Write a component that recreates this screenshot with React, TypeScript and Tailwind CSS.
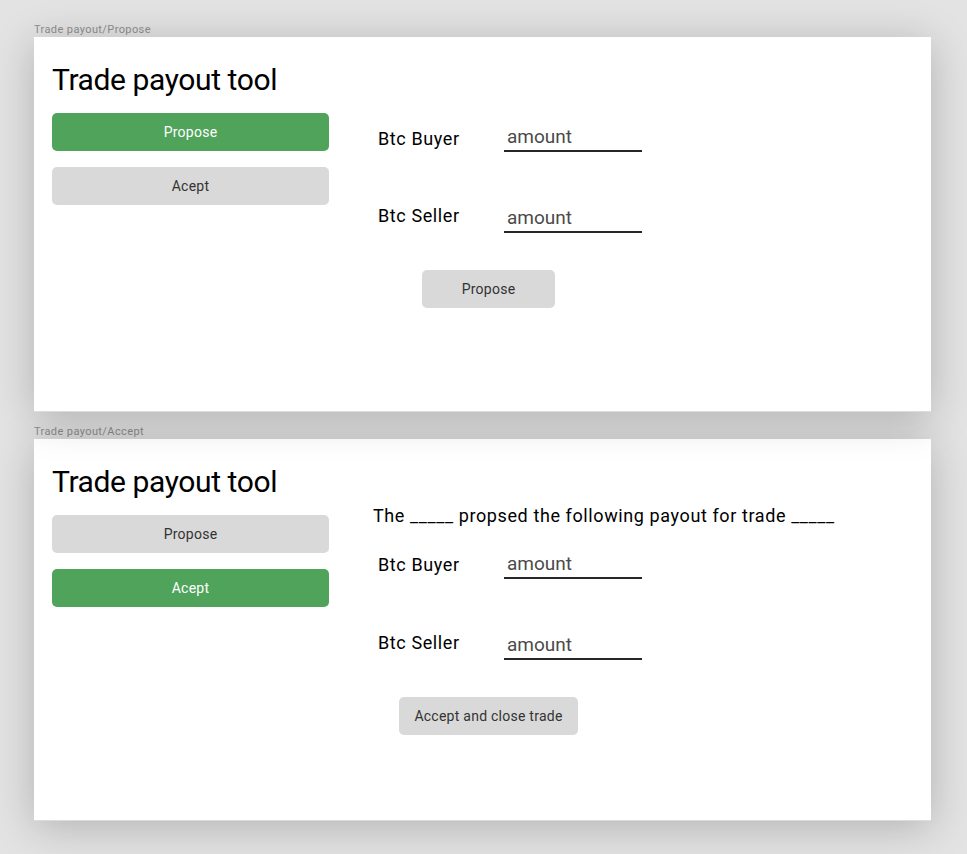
import React from "react";

type BtnProps = { label: string; active?: boolean; className?: string };

const Button = ({ label, active, className = "" }: BtnProps) => (
  <button
    className={`h-[38px] rounded-[5px] text-[14px] leading-none tracking-[0.25px] ${
      active ? "bg-[#4fa35a] text-white" : "bg-[#d9d9d9] text-[#333]"
    } ${className}`}
  >
    {label}
  </button>
);

const AmountRow = ({ name, labelTop, inputTop }: { name: string; labelTop: string; inputTop: string }) => (
  <div className="flex pl-[5px]">
    <span className={`w-[126px] text-[18px] leading-[22px] tracking-[0.6px] text-black ${labelTop}`}>{name}</span>
    <div
      className={`w-[138px] h-[27px] border-b-2 border-[#262626] pl-[3px] text-[19px] leading-[24px] text-[#4a4a4a] ${inputTop}`}
    >
      amount
    </div>
  </div>
);

const FrameLabel = ({ text, className = "" }: { text: string; className?: string }) => (
  <div className={`h-[15px] text-[11px] leading-[15px] tracking-[0.4px] text-[#8f8f8f] ${className}`}>{text}</div>
);

const Sidebar = ({ mode }: { mode: "propose" | "accept" }) => (
  <div className="w-[277px] shrink-0">
    <h1 className="text-[30px] leading-[36px] tracking-[-0.4px] text-black">Trade payout tool</h1>
    <div className="mt-[15px] flex flex-col gap-[16px]">
      <Button label="Propose" active={mode === "propose"} />
      <Button label="Acept" active={mode === "accept"} />
    </div>
  </div>
);

export default function App() {
  return (
    <div className="min-h-screen bg-[#e3e3e3] pl-[34px] pt-[22px] font-['Roboto','Liberation_Sans',sans-serif] overflow-hidden">
      <FrameLabel text="Trade payout/Propose" />
      <div className="relative z-10 flex h-[375px] w-[897px] bg-white px-[18px] pt-[25px] border-b border-[#dcdcdc] shadow-[0_6px_40px_rgba(0,0,0,0.22)]">
        <Sidebar mode="propose" />
        <div className="ml-[44px] pt-[63px]">
          <AmountRow name="Btc Buyer" labelTop="mt-[3px]" inputTop="mt-0" />
          <div className="mt-[53px]">
            <AmountRow name="Btc Seller" labelTop="mt-0" inputTop="mt-[1px]" />
          </div>
          <Button label="Propose" className="mt-[37px] ml-[49px] w-[133px]" />
        </div>
      </div>

      <FrameLabel text="Trade payout/Accept" className="mt-[12px]" />
      <div className="relative flex h-[382px] w-[897px] bg-white px-[18px] pt-[25px] border-b border-[#dcdcdc] shadow-[0_6px_40px_rgba(0,0,0,0.22)]">
        <Sidebar mode="accept" />
        <div className="ml-[44px] pt-[41px]">
          <p className="text-[18px] leading-[22px] tracking-[0.6px] text-black">
            The _____ propsed the following payout for trade _____
          </p>
          <div className="mt-[25px]">
            <AmountRow name="Btc Buyer" labelTop="mt-[2px]" inputTop="mt-0" />
          </div>
          <div className="mt-[53px]">
            <AmountRow name="Btc Seller" labelTop="mt-0" inputTop="mt-[1px]" />
          </div>
          <Button label="Accept and close trade" className="mt-[37px] ml-[26px] w-[179px]" />
        </div>
      </div>
    </div>
  );
}
